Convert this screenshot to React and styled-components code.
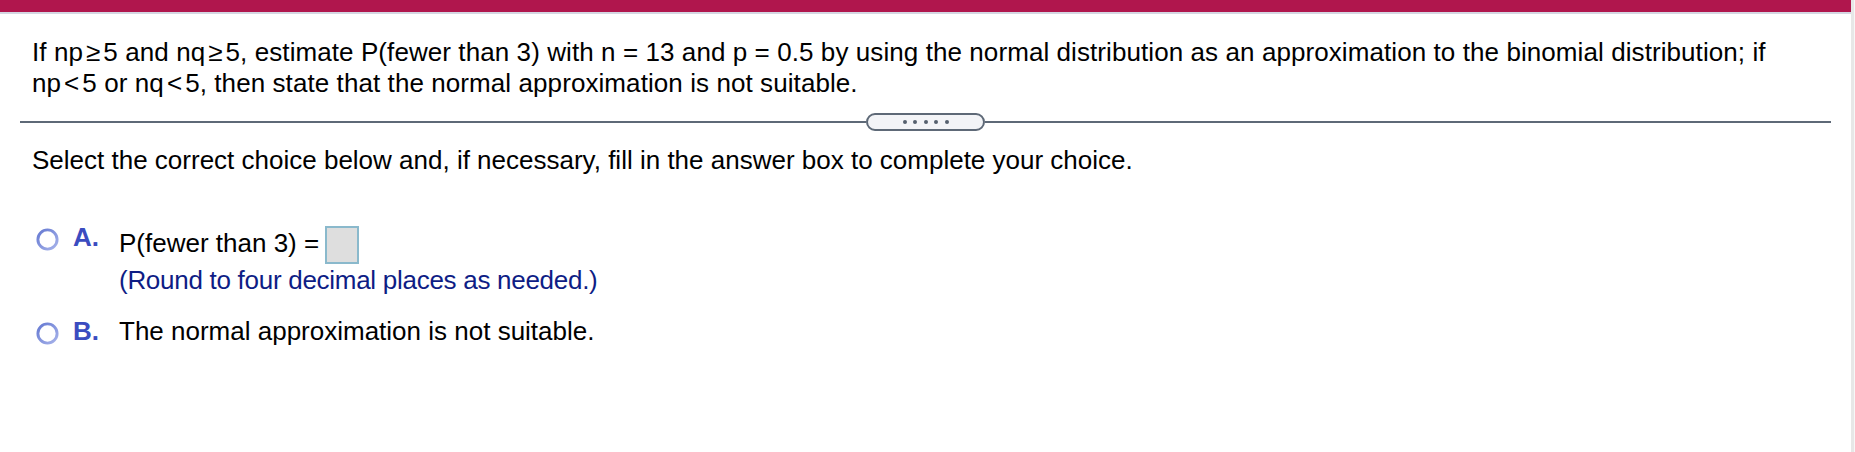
import React from "react";
import styled, { createGlobalStyle } from "styled-components";

const Global = createGlobalStyle`
  html, body { margin: 0; padding: 0; height: 100%; background: #fff; }
  #root { height: 100%; }
  body { font-family: "Liberation Sans", Arial, Helvetica, sans-serif; }
`;

const Page = styled.div`
  display: flex;
  height: 100%;
  background: #fff;
`;

const Main = styled.div`
  flex: 1;
  display: flex;
  flex-direction: column;
`;

const ScrollStrip = styled.div`
  width: 3px;
  background: #e7e7e7;
  border-right: 1px solid #f7f7f7;
`;

const TopBar = styled.div`
  height: 12px;
  background: #b0164d;
  border-bottom: 2px solid #d4d7e2;
`;

const Content = styled.div`
  padding: 0 20px;
  display: flex;
  flex-direction: column;
  font-size: 26px;
  letter-spacing: 0;
  line-height: 31px;
  color: #000;
`;

const Question = styled.p`
  margin: 22.5px 0 0 0;
  padding-left: 12px;
  white-space: nowrap;
  letter-spacing: 0.08px;
`;

const Op = styled.span`
  padding: 0 3px;
`;

const DividerRow = styled.div`
  margin-top: 14px;
  height: 18px;
  display: flex;
  align-items: center;
`;

const Rule = styled.div`
  flex: 1;
  height: 2px;
  background: #5e6977;
`;

const Pill = styled.div`
  width: 115px;
  height: 14px;
  border: 2px solid #5e6977;
  border-radius: 9px;
  background: #f3f4f7;
  display: flex;
  align-items: center;
  justify-content: center;
  gap: 6.5px;
`;

const Dot = styled.span`
  width: 4px;
  height: 4px;
  border-radius: 50%;
  background: #56606e;
`;

const Instruction = styled.p`
  margin: 14.5px 0 0 0;
  padding-left: 12px;
`;

const Options = styled.div`
  margin-top: 45.5px;
  display: flex;
  flex-direction: column;
  gap: 20.5px;
  padding-left: 15.5px;
`;

const OptionRow = styled.div`
  display: flex;
  align-items: flex-start;
`;

const Radio = styled.svg`
  width: 23px;
  height: 23px;
  margin-top: 6px;
  flex: none;
`;

const Letter = styled.span`
  width: 46px;
  margin-left: 14.5px;
  font-weight: bold;
  color: #3b4cc0;
  flex: none;
`;

const Body = styled.div`
  display: flex;
  flex-direction: column;
  margin-top: ${(p) => p.$offset}px;
`;

const AnswerLine = styled.div`
  display: flex;
  align-items: center;
  height: 38px;
`;

const Prompt = styled.span`
  padding-bottom: 3px;
  white-space: pre;
`;

const AnswerBox = styled.span`
  width: 30px;
  height: 34px;
  margin-left: 6px;
  border: 2px solid #8ab9cc;
  background: #dedede;
`;

const Hint = styled.div`
  margin-top: 1px;
  color: #0e1d85;
  letter-spacing: -0.28px;
`;

const RadioIcon = () => (
  <Radio viewBox="0 0 23 23">
    <defs>
      <linearGradient id="rg" x1="0" y1="0" x2="1" y2="1">
        <stop offset="0" stopColor="#6579d2" />
        <stop offset="1" stopColor="#a7b3ea" />
      </linearGradient>
    </defs>
    <circle cx="11.5" cy="11.5" r="9.6" fill="#fff" stroke="url(#rg)" strokeWidth="2.9" />
  </Radio>
);

const M = ({ children }) => <Op>{children}</Op>;

export default function App() {
  return (
    <Page>
      <Global />
      <Main>
        <TopBar />
        <Content>
          <Question>
            If np<M>≥</M>5 and nq<M>≥</M>5, estimate P(fewer than 3) with n = 13 and p = 0.5 by using the
            normal distribution as an approximation to the binomial distribution; if
            <br />
            np<M>&lt;</M>5 or nq<M>&lt;</M>5, then state that the normal approximation is not suitable.
          </Question>
          <DividerRow>
            <Rule />
            <Pill>
              <Dot />
              <Dot />
              <Dot />
              <Dot />
              <Dot />
            </Pill>
            <Rule />
          </DividerRow>
          <Instruction>
            Select the correct choice below and, if necessary, fill in the answer box to complete your choice.
          </Instruction>
          <Options>
            <OptionRow>
              <RadioIcon />
              <Letter>A.</Letter>
              <Body $offset={4}>
                <AnswerLine>
                  <Prompt>P(fewer than 3) =</Prompt>
                  <AnswerBox />
                </AnswerLine>
                <Hint>(Round to four decimal places as needed.)</Hint>
              </Body>
            </OptionRow>
            <OptionRow>
              <RadioIcon />
              <Letter>B.</Letter>
              <Body $offset={0}>
                <div>The normal approximation is not suitable.</div>
              </Body>
            </OptionRow>
          </Options>
        </Content>
      </Main>
      <ScrollStrip />
    </Page>
  );
}
